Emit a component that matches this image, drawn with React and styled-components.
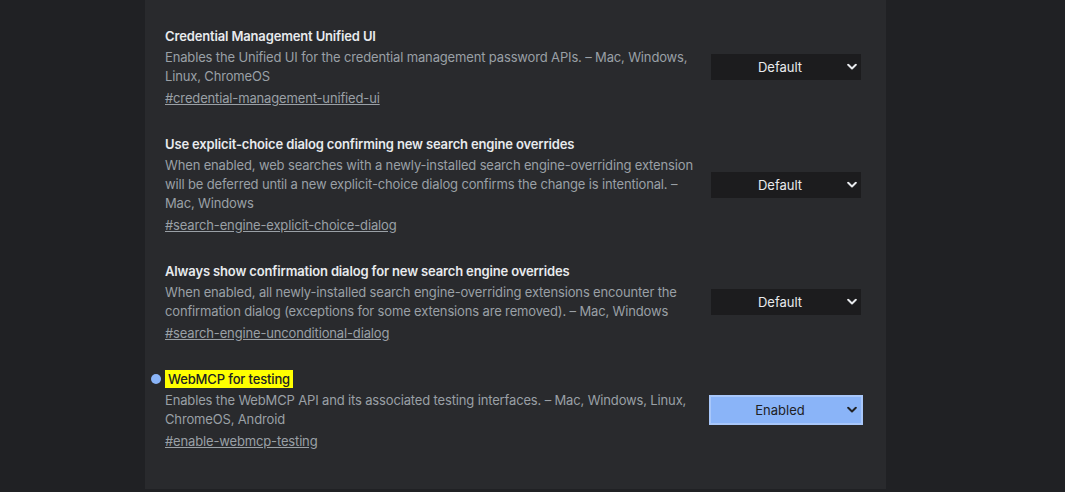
import styled, { createGlobalStyle } from 'styled-components';

const GlobalStyle = createGlobalStyle`
    html, body {
        margin: 0;
        padding: 0;
        background: #202124;
    }
    body {
        font-family: Inter, "Noto Sans", sans-serif;
        -webkit-font-smoothing: antialiased;
    }
`

const flags = [
    {
        name: "Credential Management Unified UI",
        description: "Enables the Unified UI for the credential management password APIs. – Mac, Windows, Linux, ChromeOS",
        link: "#credential-management-unified-ui",
        value: "Default",
    },
    {
        name: "Use explicit-choice dialog confirming new search engine overrides",
        description: "When enabled, web searches with a newly-installed search engine-overriding extension will be deferred until a new explicit-choice dialog confirms the change is intentional. – Mac, Windows",
        link: "#search-engine-explicit-choice-dialog",
        value: "Default",
    },
    {
        name: "Always show confirmation dialog for new search engine overrides",
        description: "When enabled, all newly-installed search engine-overriding extensions encounter the confirmation dialog (exceptions for some extensions are removed). – Mac, Windows",
        link: "#search-engine-unconditional-dialog",
        value: "Default",
    },
    {
        name: "WebMCP for testing",
        description: "Enables the WebMCP API and its associated testing interfaces. – Mac, Windows, Linux, ChromeOS, Android",
        link: "#enable-webmcp-testing",
        value: "Enabled",
        highlight: true,
    },
];

const Chevron = () => (
    <svg width="10" height="7" viewBox="0 0 10 7" fill="none">
        <path d="M1.2 1.3 L5 5 L8.8 1.3" stroke="currentColor" strokeWidth="2" strokeLinecap="round" strokeLinejoin="round" />
    </svg>
);

const App = () => {
    return (
        <>
            <GlobalStyle />
            <Page>
                <Panel>
                    {flags.map((flag) => (
                        <Row key={flag.link}>
                            <Info>
                                <Title>
                                    {flag.highlight && <Dot />}
                                    {flag.highlight ? <Mark>{flag.name}</Mark> : flag.name}
                                </Title>
                                <Description>{flag.description}</Description>
                                <Link href={flag.link}>{flag.link}</Link>
                            </Info>
                            <Select $enabled={flag.value === "Enabled"}>
                                <span>{flag.value}</span>
                                <Arrow><Chevron /></Arrow>
                            </Select>
                        </Row>
                    ))}
                </Panel>
            </Page>
        </>
    );
};

const Page = styled.div`
    width: 1065px;
    height: 492px;
    overflow: hidden;
    background: #202124;
`

const Panel = styled.div`
    margin-left: 145px;
    width: 741px;
    height: 489px;
    box-sizing: border-box;
    padding: 13px 25px 0 20px;
    background: #292a2d;
    display: flex;
    flex-direction: column;
`

const Row = styled.div`
    display: flex;
    align-items: center;
    gap: 10px;
    padding: 13px 0;
`

const Info = styled.div`
    flex: 0 0 536px;
    display: flex;
    flex-direction: column;
    letter-spacing: -0.15px;
`

const Title = styled.div`
    position: relative;
    font-size: 13px;
    line-height: 20px;
    font-weight: 600;
    color: #e8eaed;
`

const Dot = styled.span`
    position: absolute;
    left: -14px;
    top: 5px;
    width: 10px;
    height: 10px;
    border-radius: 50%;
    background: #8ab4f8;
`

const Mark = styled.span`
    background: #ffff00;
    color: #202124;
    font-weight: 500;
    padding: 1px 3px;
`

const Description = styled.div`
    margin-top: 2px;
    font-size: 13px;
    line-height: 19px;
    color: #9aa0a6;
`

const Link = styled.a`
    margin-top: 3px;
    font-size: 13px;
    line-height: 19px;
    color: #9aa0a6;
    text-decoration: underline;
    align-self: flex-start;
`

const Select = styled.div`
    position: relative;
    flex: 0 0 150px;
    height: 26px;
    box-sizing: border-box;
    display: flex;
    align-items: center;
    justify-content: center;
    padding-right: 12px;
    font-size: 13px;
    background: ${({ $enabled }) => ($enabled ? "#8ab4f8" : "#1c1c1e")};
    color: ${({ $enabled }) => ($enabled ? "#202124" : "#e8eaed")};
    outline: ${({ $enabled }) => ($enabled ? "2px solid #a8c7fa" : "none")};
`

const Arrow = styled.span`
    position: absolute;
    right: 4px;
    top: 50%;
    transform: translateY(-50%);
    display: flex;
`

export default App;
